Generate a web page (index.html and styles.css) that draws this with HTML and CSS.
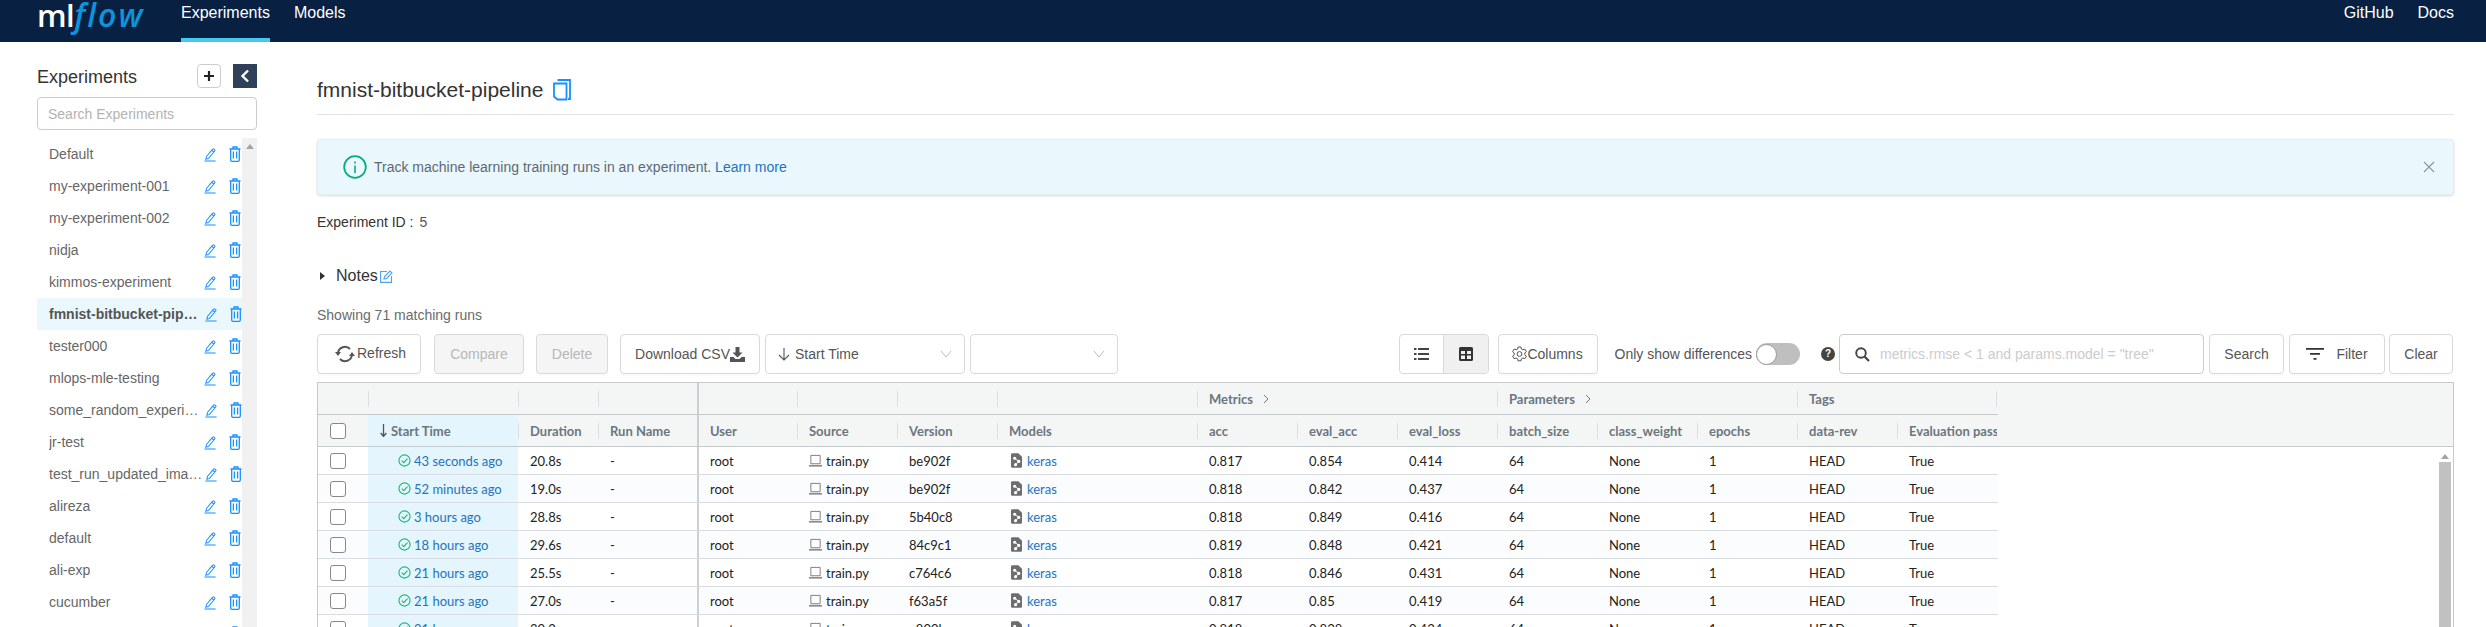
FILE: index.html
```html
<!DOCTYPE html>
<html>
<head>
    <title>MLflow Experiments</title>
    <link rel="stylesheet" href="styles.css">
</head>
<body>
    <svg class="sprites" width="0" height="0">
        <symbol id="i-edit" viewBox="0 0 13 16"><path d="M2.6 10.2 9.3 2.2a1 1 0 0 1 1.4-.1l.8.7a1 1 0 0 1 .1 1.4L4.9 12.2l-2.8.9zM8.4 3.4l2.3 2M.4 15h12.2" fill="none" stroke="currentColor" stroke-width="1.1"/></symbol>
        <symbol id="i-trash" viewBox="0 0 12 16"><path d="M.5 3h11M4 3V1h4v2M1.7 3v11a1.3 1.3 0 0 0 1.3 1.3h6a1.3 1.3 0 0 0 1.3-1.3V3M4.4 5.5v7M7.6 5.5v7" fill="none" stroke="currentColor" stroke-width="1.3"/></symbol>
        <symbol id="i-check" viewBox="0 0 14 14"><circle cx="7" cy="7" r="6" fill="none" stroke="currentColor" stroke-width="1.2"/><path d="M4 7.2l2.2 2.2L10.2 5" fill="none" stroke="currentColor" stroke-width="1.2"/></symbol>
        <symbol id="i-laptop" viewBox="0 0 14 14"><path d="M2 1.5h10v9H2z" fill="none" stroke="#777" stroke-width="1"/><path d="M0 12h14v1.5H0z" fill="#777"/></symbol>
        <symbol id="i-model" viewBox="0 0 12 16"><path d="M1.5 0H8l4 4v10.5a1.5 1.5 0 0 1-1.5 1.5h-9A1.5 1.5 0 0 1 0 14.500V1.500A1.500 1.500 0 0 1 1.500 0z" fill="#6d6d6d"/><circle cx="4" cy="5.500" r="1.700" fill="#fff"/><circle cx="8.500" cy="9" r="1.700" fill="#fff"/><circle cx="5" cy="12.500" r="1.700" fill="#fff"/><path d="M4 5.500l4.500 3.500L5 12.500" fill="none" stroke="#fff"/></symbol>
    </svg>

    <header class="topbar">
        <a class="logo"><span class="logo-ml">ml</span><span class="logo-flow">flow</span></a>
        <a class="tab tab-active">Experiments</a>
        <a class="tab">Models</a>
        <div class="topbar-right">
            <a class="tab">GitHub</a>
            <a class="tab">Docs</a>
        </div>
    </header>

    <div class="layout">
        <aside class="sidebar">
            <div class="sidebar-head">
                <h1>Experiments</h1>
                <button class="add-btn">
                    <svg width="12" height="12" viewBox="0 0 12 12"><path d="M6 1v10M1 6h10" stroke="#222" stroke-width="2.200"/></svg>
                </button>
                <button class="collapse-btn">
                    <svg width="10" height="14" viewBox="0 0 10 14"><path d="M8 1.500 2.500 7 8 12.500" fill="none" stroke="#fff" stroke-width="2.400"/></svg>
                </button>
            </div>
            <input class="exp-search" type="text" placeholder="Search Experiments">
            <div class="exp-wrap">
                <ul class="exp-list">
                    <li class="exp-row"><span class="exp-name">Default</span><svg class="exp-edit"><use href="#i-edit"/></svg><svg class="exp-trash"><use href="#i-trash"/></svg></li>
                    <li class="exp-row"><span class="exp-name">my-experiment-001</span><svg class="exp-edit"><use href="#i-edit"/></svg><svg class="exp-trash"><use href="#i-trash"/></svg></li>
                    <li class="exp-row"><span class="exp-name">my-experiment-002</span><svg class="exp-edit"><use href="#i-edit"/></svg><svg class="exp-trash"><use href="#i-trash"/></svg></li>
                    <li class="exp-row"><span class="exp-name">nidja</span><svg class="exp-edit"><use href="#i-edit"/></svg><svg class="exp-trash"><use href="#i-trash"/></svg></li>
                    <li class="exp-row"><span class="exp-name">kimmos-experiment</span><svg class="exp-edit"><use href="#i-edit"/></svg><svg class="exp-trash"><use href="#i-trash"/></svg></li>
                    <li class="exp-row exp-active exp-long"><span class="exp-name">fmnist-bitbucket-pipeline</span><svg class="exp-edit"><use href="#i-edit"/></svg><svg class="exp-trash"><use href="#i-trash"/></svg></li>
                    <li class="exp-row"><span class="exp-name">tester000</span><svg class="exp-edit"><use href="#i-edit"/></svg><svg class="exp-trash"><use href="#i-trash"/></svg></li>
                    <li class="exp-row"><span class="exp-name">mlops-mle-testing</span><svg class="exp-edit"><use href="#i-edit"/></svg><svg class="exp-trash"><use href="#i-trash"/></svg></li>
                    <li class="exp-row exp-long"><span class="exp-name">some_random_experiment</span><svg class="exp-edit"><use href="#i-edit"/></svg><svg class="exp-trash"><use href="#i-trash"/></svg></li>
                    <li class="exp-row"><span class="exp-name">jr-test</span><svg class="exp-edit"><use href="#i-edit"/></svg><svg class="exp-trash"><use href="#i-trash"/></svg></li>
                    <li class="exp-row exp-long"><span class="exp-name">test_run_updated_image_name</span><svg class="exp-edit"><use href="#i-edit"/></svg><svg class="exp-trash"><use href="#i-trash"/></svg></li>
                    <li class="exp-row"><span class="exp-name">alireza</span><svg class="exp-edit"><use href="#i-edit"/></svg><svg class="exp-trash"><use href="#i-trash"/></svg></li>
                    <li class="exp-row"><span class="exp-name">default</span><svg class="exp-edit"><use href="#i-edit"/></svg><svg class="exp-trash"><use href="#i-trash"/></svg></li>
                    <li class="exp-row"><span class="exp-name">ali-exp</span><svg class="exp-edit"><use href="#i-edit"/></svg><svg class="exp-trash"><use href="#i-trash"/></svg></li>
                    <li class="exp-row"><span class="exp-name">cucumber</span><svg class="exp-edit"><use href="#i-edit"/></svg><svg class="exp-trash"><use href="#i-trash"/></svg></li>
                    <li class="exp-row"><span class="exp-name">test</span><svg class="exp-edit"><use href="#i-edit"/></svg><svg class="exp-trash"><use href="#i-trash"/></svg></li>
                </ul>
                <div class="exp-scroll"><span class="arrow-up"></span></div>
            </div>
        </aside>

        <main class="content">
            <div class="title-row">
                <h2>fmnist-bitbucket-pipeline</h2>
                <svg class="copy-icon" width="18" height="22" viewBox="0 0 18 22"><path d="M4.500 1h12.500v19h-2M1 4.500h12.500V20.500H4.500L1 17.500z" fill="none" stroke="#1890ff" stroke-width="1.800"/></svg>
            </div>

            <div class="notice">
                <svg class="notice-icon" width="24" height="24" viewBox="0 0 24 24"><circle cx="12" cy="12" r="10.800" fill="none" stroke="#0bae78" stroke-width="1.800"/><path d="M12 10.500V18M12 6.500v2" stroke="#0bae78" stroke-width="1.600"/></svg>
                <span>Track machine learning training runs in an experiment. <a class="link">Learn more</a></span>
                <svg class="notice-close" width="12" height="12" viewBox="0 0 12 12"><path d="M1 1l10 10M11 1 1 11" stroke="#8a9499" stroke-width="1.100"/></svg>
            </div>

            <div class="exp-id"><span class="exp-id-label">Experiment ID :</span><span class="exp-id-value">5</span></div>

            <div class="notes">
                <span class="notes-caret"></span>
                <span class="notes-label">Notes</span>
                <svg width="13" height="13" viewBox="0 0 13 13"><path d="M7 1.500H.6v10.900h10.900V6" fill="none" stroke="#4aa3f5" stroke-width="1.100"/><path d="M4.500 6.500 10 1l2 2-5.500 5.500-2.500.5z" fill="none" stroke="#4aa3f5" stroke-width="1.100"/></svg>
            </div>

            <div class="showing">Showing 71 matching runs</div>

            <div class="toolbar">
                <button class="btn btn-refresh">
                    <svg width="20" height="20" viewBox="0 0 20 20"><path d="M3 9a7 7 0 0 1 12-4" fill="none" stroke="#555" stroke-width="2"/><path d="M17 11a7 7 0 0 1-12 4" fill="none" stroke="#555" stroke-width="2"/><path d="M0 8h6l-3 4zM14 12h6l-3-4z" fill="#555"/></svg>
                    <span class="refresh-label">Refresh</span>
                </button>
                <button class="btn btn-off btn-compare">Compare</button>
                <button class="btn btn-off btn-delete">Delete</button>
                <button class="btn btn-csv">Download CSV<svg width="15" height="15" viewBox="0 0 15 15"><path d="M5.500 0h4v5.500h3L7.500 10.500 2.500 5.500h3z" fill="#555"/><path d="M0 10h3.500l2 2h4l2-2H15v5H0z" fill="#555"/></svg></button>
                <div class="select select-sort">
                    <svg width="12" height="14" viewBox="0 0 12 14"><path d="M6 1v12M1 8l5 5 5-5" fill="none" stroke="#555" stroke-width="1.100"/></svg>
                    <span class="select-text">Start Time</span>
                    <svg class="select-chev" width="12" height="8" viewBox="0 0 12 8"><path d="M1 1l5 6 5-6" fill="none" stroke="#bbb" stroke-width="1"/></svg>
                </div>
                <div class="select select-empty">
                    <svg class="select-chev" width="12" height="8" viewBox="0 0 12 8"><path d="M1 1l5 6 5-6" fill="none" stroke="#bbb" stroke-width="1"/></svg>
                </div>

                <div class="toolbar-right">
                    <div class="view-toggle">
                        <span class="view-btn">
                            <svg width="15" height="14" viewBox="0 0 15 14"><path d="M0 1h2.500v2H0zM0 6h2.500v2H0zM0 11h2.500v2H0zM4 1h11v2H4zM4 6h11v2H4zM4 11h11v2H4z" fill="#444"/></svg>
                        </span>
                        <span class="view-btn view-on">
                            <svg width="14" height="14" viewBox="0 0 14 14"><path d="M0 1.500A1.500 1.500 0 0 1 1.500 0h11A1.500 1.500 0 0 1 14 1.500v11a1.500 1.500 0 0 1-1.500 1.500h-11A1.500 1.500 0 0 1 0 12.500zM2 4v3h4V4zm6 0v3h4V4zM2 8.500v3.500h4V8.500zm6 0v3.500h4V8.500z" fill="#333" fill-rule="evenodd"/></svg>
                        </span>
                    </div>
                    <button class="btn btn-columns">
                        <svg width="15" height="16" viewBox="0 0 15 16"><path d="M6 1h3l.4 2 1.500.8 2-.7 1.500 2.600-1.600 1.300v1.800l1.600 1.300-1.500 2.600-2-.7-1.500.8-.4 2H6l-.4-2-1.500-.8-2 .7L.6 10.100l1.600-1.300V7L.6 5.700l1.500-2.600 2 .7 1.500-.8z" fill="none" stroke="#555"/><circle cx="7.500" cy="8" r="2.400" fill="none" stroke="#555"/></svg>Columns
                    </button>
                    <span class="diff-label">Only show differences</span>
                    <span class="switch"><span class="switch-knob"></span></span>
                    <span class="help">?</span>
                    <div class="search-box">
                        <svg width="15" height="15" viewBox="0 0 15 15"><circle cx="6" cy="6" r="4.800" fill="none" stroke="#444" stroke-width="1.900"/><path d="M9.500 9.500 14 14" stroke="#444" stroke-width="2.200"/></svg>
                        <input type="text" placeholder="metrics.rmse &lt; 1 and params.model = &quot;tree&quot;">
                    </div>
                    <button class="btn btn-search">Search</button>
                    <button class="btn btn-filter">
                        <svg width="18" height="14" viewBox="0 0 18 14"><path d="M0 1h18v1.800H0zM4 6h10v1.800H4zM7.500 11h3v1.800h-3z" fill="#333"/></svg>Filter
                    </button>
                    <button class="btn btn-clear">Clear</button>
                </div>
            </div>

            <div class="runs">
                <div class="runs-head">
                    <div class="grid group-row">
                        <div class="hcell"></div>
                        <div class="hcell"><span class="sep"></span></div>
                        <div class="hcell"><span class="sep"></span></div>
                        <div class="hcell"><span class="sep"></span></div>
                        <div class="hcell col-split"></div>
                        <div class="hcell"><span class="sep"></span></div>
                        <div class="hcell"><span class="sep"></span></div>
                        <div class="hcell"><span class="sep"></span></div>
                        <div class="hcell span-3"><span class="sep">Metrics<svg class="group-chev" width="7" height="10" viewBox="0 0 7 10"><path d="M1 1l4 4-4 4" fill="none" stroke="#777"/></svg></span></div>
                        <div class="hcell span-3"><span class="sep">Parameters<svg class="group-chev" width="7" height="10" viewBox="0 0 7 10"><path d="M1 1l4 4-4 4" fill="none" stroke="#777"/></svg></span></div>
                        <div class="hcell span-2 hcell-end"><span class="sep">Tags</span><span class="sep"></span></div>
                    </div>
                    <div class="grid name-row">
                        <div class="hcell check-cell"><span class="box"></span></div>
                        <div class="hcell sorted"><span class="sep sep-off"><svg width="7" height="13" viewBox="0 0 7 13"><path d="M3.500 0v12M.7 9l2.800 3.500L6.300 9" fill="none" stroke="#555" stroke-width="1.300"/></svg> Start Time</span></div>
                        <div class="hcell"><span class="sep">Duration</span></div>
                        <div class="hcell"><span class="sep">Run Name</span></div>
                        <div class="hcell col-split">User</div>
                        <div class="hcell"><span class="sep">Source</span></div>
                        <div class="hcell"><span class="sep">Version</span></div>
                        <div class="hcell"><span class="sep">Models</span></div>
                        <div class="hcell"><span class="sep">acc</span></div>
                        <div class="hcell"><span class="sep">eval_acc</span></div>
                        <div class="hcell"><span class="sep">eval_loss</span></div>
                        <div class="hcell"><span class="sep">batch_size</span></div>
                        <div class="hcell"><span class="sep">class_weight</span></div>
                        <div class="hcell"><span class="sep">epochs</span></div>
                        <div class="hcell"><span class="sep">data-rev</span></div>
                        <div class="hcell"><span class="sep">Evaluation pass</span></div>
                    </div>
                </div>

                <div class="runs-body">
                    <div class="rows">
                        <div class="grid run-row">
                            <div class="cell check-cell"><span class="box"></span></div>
                            <div class="cell sorted time-cell"><svg class="ok"><use href="#i-check"/></svg><a class="link">43 seconds ago</a></div>
                            <div class="cell">20.8s</div><div class="cell">-</div><div class="cell col-split">root</div>
                            <div class="cell"><svg class="src"><use href="#i-laptop"/></svg>train.py</div><div class="cell">be902f</div>
                            <div class="cell cell-model"><svg class="mdl"><use href="#i-model"/></svg><a class="link">keras</a></div>
                            <div class="cell">0.817</div><div class="cell">0.854</div><div class="cell">0.414</div>
                            <div class="cell">64</div><div class="cell">None</div><div class="cell">1</div><div class="cell">HEAD</div><div class="cell">True</div>
                        </div>
                        <div class="grid run-row">
                            <div class="cell check-cell"><span class="box"></span></div>
                            <div class="cell sorted time-cell"><svg class="ok"><use href="#i-check"/></svg><a class="link">52 minutes ago</a></div>
                            <div class="cell">19.0s</div><div class="cell">-</div><div class="cell col-split">root</div>
                            <div class="cell"><svg class="src"><use href="#i-laptop"/></svg>train.py</div><div class="cell">be902f</div>
                            <div class="cell cell-model"><svg class="mdl"><use href="#i-model"/></svg><a class="link">keras</a></div>
                            <div class="cell">0.818</div><div class="cell">0.842</div><div class="cell">0.437</div>
                            <div class="cell">64</div><div class="cell">None</div><div class="cell">1</div><div class="cell">HEAD</div><div class="cell">True</div>
                        </div>
                        <div class="grid run-row">
                            <div class="cell check-cell"><span class="box"></span></div>
                            <div class="cell sorted time-cell"><svg class="ok"><use href="#i-check"/></svg><a class="link">3 hours ago</a></div>
                            <div class="cell">28.8s</div><div class="cell">-</div><div class="cell col-split">root</div>
                            <div class="cell"><svg class="src"><use href="#i-laptop"/></svg>train.py</div><div class="cell">5b40c8</div>
                            <div class="cell cell-model"><svg class="mdl"><use href="#i-model"/></svg><a class="link">keras</a></div>
                            <div class="cell">0.818</div><div class="cell">0.849</div><div class="cell">0.416</div>
                            <div class="cell">64</div><div class="cell">None</div><div class="cell">1</div><div class="cell">HEAD</div><div class="cell">True</div>
                        </div>
                        <div class="grid run-row">
                            <div class="cell check-cell"><span class="box"></span></div>
                            <div class="cell sorted time-cell"><svg class="ok"><use href="#i-check"/></svg><a class="link">18 hours ago</a></div>
                            <div class="cell">29.6s</div><div class="cell">-</div><div class="cell col-split">root</div>
                            <div class="cell"><svg class="src"><use href="#i-laptop"/></svg>train.py</div><div class="cell">84c9c1</div>
                            <div class="cell cell-model"><svg class="mdl"><use href="#i-model"/></svg><a class="link">keras</a></div>
                            <div class="cell">0.819</div><div class="cell">0.848</div><div class="cell">0.421</div>
                            <div class="cell">64</div><div class="cell">None</div><div class="cell">1</div><div class="cell">HEAD</div><div class="cell">True</div>
                        </div>
                        <div class="grid run-row">
                            <div class="cell check-cell"><span class="box"></span></div>
                            <div class="cell sorted time-cell"><svg class="ok"><use href="#i-check"/></svg><a class="link">21 hours ago</a></div>
                            <div class="cell">25.5s</div><div class="cell">-</div><div class="cell col-split">root</div>
                            <div class="cell"><svg class="src"><use href="#i-laptop"/></svg>train.py</div><div class="cell">c764c6</div>
                            <div class="cell cell-model"><svg class="mdl"><use href="#i-model"/></svg><a class="link">keras</a></div>
                            <div class="cell">0.818</div><div class="cell">0.846</div><div class="cell">0.431</div>
                            <div class="cell">64</div><div class="cell">None</div><div class="cell">1</div><div class="cell">HEAD</div><div class="cell">True</div>
                        </div>
                        <div class="grid run-row">
                            <div class="cell check-cell"><span class="box"></span></div>
                            <div class="cell sorted time-cell"><svg class="ok"><use href="#i-check"/></svg><a class="link">21 hours ago</a></div>
                            <div class="cell">27.0s</div><div class="cell">-</div><div class="cell col-split">root</div>
                            <div class="cell"><svg class="src"><use href="#i-laptop"/></svg>train.py</div><div class="cell">f63a5f</div>
                            <div class="cell cell-model"><svg class="mdl"><use href="#i-model"/></svg><a class="link">keras</a></div>
                            <div class="cell">0.817</div><div class="cell">0.85</div><div class="cell">0.419</div>
                            <div class="cell">64</div><div class="cell">None</div><div class="cell">1</div><div class="cell">HEAD</div><div class="cell">True</div>
                        </div>
                        <div class="grid run-row">
                            <div class="cell check-cell"><span class="box"></span></div>
                            <div class="cell sorted time-cell"><svg class="ok"><use href="#i-check"/></svg><a class="link">21 hours ago</a></div>
                            <div class="cell">30.2s</div><div class="cell">-</div><div class="cell col-split">root</div>
                            <div class="cell"><svg class="src"><use href="#i-laptop"/></svg>train.py</div><div class="cell">e800ba</div>
                            <div class="cell cell-model"><svg class="mdl"><use href="#i-model"/></svg><a class="link">keras</a></div>
                            <div class="cell">0.818</div><div class="cell">0.838</div><div class="cell">0.434</div>
                            <div class="cell">64</div><div class="cell">None</div><div class="cell">1</div><div class="cell">HEAD</div><div class="cell">True</div>
                        </div>
                    </div>
                    <div class="runs-scroll">
                        <span class="arrow-up"></span>
                        <span class="runs-thumb"></span>
                    </div>
                </div>
            </div>
        </main>
    </div>
</body>
</html>
```

FILE: styles.css
```css
* {
    box-sizing: border-box;
}
html, body {
    height: 100%;
}
body {
    margin: 0;
    font-family: "Liberation Sans", Arial, sans-serif;
    font-size: 14px;
    color: #333;
    background: #fff;
    display: flex;
    flex-direction: column;
    overflow: hidden;
}
.sprites {
    position: absolute;
}
h1, h2, ul {
    margin: 0;
    padding: 0;
    font-weight: normal;
}
button {
    font-family: inherit;
}
.link {
    color: #2374bb;
}

/* top bar */
.topbar {
    flex: none;
    height: 42px;
    padding: 0 32px 0 37px;
    background: #082142;
    display: flex;
}
.logo {
    width: 144px;
    height: 42px;
    line-height: 30px;
    white-space: nowrap;
}
.logo-ml {
    font-family: "Open Sans", sans-serif;
    font-size: 31px;
    font-weight: 600;
    letter-spacing: -0.5px;
    color: #fff;
}
.logo-flow {
    font-family: "Open Sans", sans-serif;
    font-size: 32px;
    font-style: italic;
    font-weight: 600;
    letter-spacing: 2px;
    color: #0c95dc;
}
.tab {
    height: 42px;
    margin-right: 24px;
    line-height: 26px;
    font-size: 16px;
    color: #fff;
}
.tab-active {
    border-bottom: 4px solid #43c9ed;
}
.topbar-right {
    margin-left: auto;
    display: flex;
}
.topbar-right .tab:last-child {
    margin-right: 0;
}

.layout {
    flex: 1;
    min-height: 0;
    display: flex;
}

/* experiments sidebar */
.sidebar {
    flex: none;
    width: 317px;
    padding: 22px 60px 0 37px;
}
.sidebar-head {
    height: 24px;
    display: flex;
    align-items: center;
}
.sidebar-head h1 {
    font-size: 18px;
    line-height: 24px;
    padding-top: 2px;
    margin-right: auto;
}
.add-btn {
    width: 24px;
    height: 24px;
    margin-right: 12px;
    padding: 0;
    border: 1px solid #ccc;
    border-radius: 4px;
    background: #fff;
    display: flex;
    align-items: center;
    justify-content: center;
}
.collapse-btn {
    width: 24px;
    height: 24px;
    padding: 0;
    border: 0;
    background: #2e4159;
    display: flex;
    align-items: center;
    justify-content: center;
}
.exp-search {
    display: block;
    width: 220px;
    height: 33px;
    margin-top: 9px;
    padding: 0 10px;
    border: 1px solid #ccc;
    border-radius: 4px;
    font-family: inherit;
    font-size: 14px;
}
.exp-search::placeholder {
    color: #b3b3b3;
}
.exp-wrap {
    margin-top: 8px;
    display: flex;
}
.exp-list {
    width: 205px;
    list-style: none;
}
.exp-row {
    height: 32px;
    padding-left: 12px;
    display: flex;
    align-items: center;
    color: #666;
}
.exp-name {
    width: 154px;
    white-space: nowrap;
    overflow: hidden;
    text-overflow: ellipsis;
}
.exp-active {
    background: #eaf8fe;
    font-weight: bold;
    color: #555;
}
.exp-edit {
    width: 12px;
    height: 15px;
    margin-left: 1px;
    color: #1890ff;
}
.exp-long .exp-edit {
    margin-left: 2px;
}
.exp-trash {
    width: 12px;
    height: 16px;
    margin-left: 13px;
    color: #1890ff;
}
.exp-scroll {
    width: 15px;
    height: 520px;
    padding-top: 6px;
    background: #f1f1f1;
    display: flex;
    justify-content: center;
}
.arrow-up {
    width: 0;
    height: 0;
    border-left: 4px solid transparent;
    border-right: 4px solid transparent;
    border-bottom: 5px solid #a3a3a3;
}

/* main column */
.content {
    flex: 1;
    min-width: 0;
    padding-right: 32px;
}
.title-row {
    height: 73px;
    padding-top: 34px;
    border-bottom: 1px solid #e4e4e4;
    display: flex;
    align-items: flex-start;
}
.title-row h2 {
    font-size: 21px;
    line-height: 28px;
}
.copy-icon {
    margin: 3px 0 0 10px;
}
.notice {
    height: 56px;
    margin-top: 24px;
    padding: 0 18px 0 25px;
    background: #eaf8fe;
    border: 1px solid #e8eef0;
    border-radius: 4px;
    box-shadow: 0 1px 3px rgba(0, 0, 0, 0.15);
    display: flex;
    align-items: center;
    color: #5f6871;
}
.notice-icon {
    margin-right: 7px;
}
.notice-close {
    margin-left: auto;
}
.exp-id {
    margin-top: 17px;
    line-height: 20px;
}
.exp-id-value {
    margin-left: 6px;
    color: #555;
}
.notes {
    height: 24px;
    margin-top: 32px;
    display: flex;
    align-items: center;
}
.notes-caret {
    width: 0;
    height: 0;
    margin: 0 11px 0 3px;
    border-top: 4px solid transparent;
    border-bottom: 4px solid transparent;
    border-left: 5px solid #333;
}
.notes-label {
    font-size: 16px;
    margin-right: 2px;
}
.showing {
    margin-top: 17px;
    line-height: 20px;
    color: #6b6b6b;
}

/* toolbar */
.toolbar {
    height: 40px;
    margin-top: 9px;
    display: flex;
}
.btn {
    height: 40px;
    padding: 0;
    border: 1px solid #d9d9d9;
    border-radius: 4px;
    background: #fff;
    box-shadow: 0 2px 0 rgba(0, 0, 0, 0.015);
    font-size: 14px;
    color: #555;
    display: flex;
    align-items: center;
    justify-content: center;
}
.btn-refresh {
    width: 104px;
    padding-left: 17px;
    justify-content: flex-start;
}
.refresh-label {
    margin: 0 0 2px 2px;
}
.btn-off {
    background: #f5f5f5;
    color: #b8b8b8;
}
.btn-compare {
    width: 90px;
    margin-left: 13px;
}
.btn-delete {
    width: 72px;
    margin-left: 12px;
}
.btn-csv {
    width: 140px;
    margin-left: 12px;
}
.select {
    height: 40px;
    padding: 0 12px;
    border: 1px solid #d9d9d9;
    border-radius: 4px;
    display: flex;
    align-items: center;
    color: #555;
}
.select-sort {
    width: 200px;
    margin-left: 5px;
}
.select-empty {
    width: 148px;
    margin-left: 5px;
}
.select-text {
    margin-left: 5px;
}
.select-chev {
    margin-left: auto;
}
.toolbar-right {
    margin-left: auto;
    display: flex;
    align-items: center;
}
.view-toggle {
    width: 90px;
    height: 40px;
    border: 1px solid #d9d9d9;
    border-radius: 4px;
    display: flex;
    overflow: hidden;
}
.view-btn {
    flex: 1;
    display: flex;
    align-items: center;
    justify-content: center;
}
.view-on {
    background: #f0f0f0;
    border-left: 1px solid #d9d9d9;
}
.btn-columns {
    width: 100px;
    margin-left: 9px;
}
.diff-label {
    margin-left: 17px;
    color: #555;
}
.switch {
    width: 44px;
    height: 22px;
    margin-left: 4px;
    border-radius: 11px;
    background: #bfbfbf;
    display: flex;
    align-items: center;
}
.switch-knob {
    width: 21px;
    height: 21px;
    border-radius: 50%;
    background: #fff;
    border: 1px solid #999;
}
.help {
    width: 14px;
    height: 14px;
    margin-left: 21px;
    border-radius: 50%;
    background: #444;
    color: #fff;
    font-size: 10px;
    font-weight: bold;
    line-height: 14px;
    text-align: center;
}
.search-box {
    width: 365px;
    height: 40px;
    margin-left: 4px;
    padding-left: 15px;
    border: 1px solid #ccc;
    border-radius: 4px;
    display: flex;
    align-items: center;
}
.search-box input {
    flex: 1;
    min-width: 0;
    margin-left: 10px;
    padding: 0;
    border: 0;
    outline: 0;
    font-family: inherit;
    font-size: 14px;
}
.search-box input::placeholder {
    color: #ccc;
}
.btn-search {
    width: 75px;
    margin-left: 5px;
}
.btn-filter {
    width: 96px;
    margin-left: 5px;
    gap: 12px;
}
.btn-clear {
    width: 64px;
    margin: 0 1px 0 4px;
}

/* runs table */
.runs {
    margin-top: 8px;
    border: 1px solid #c4c9cc;
    border-bottom: 0;
    font-family: Lato, "Open Sans", sans-serif;
    font-size: 13px;
}
.runs-head {
    background: #f4f6f6;
    border-bottom: 1px solid #c4c9cc;
}
.grid {
    width: 1680px;
    display: grid;
    grid-template-columns: 50px 150px 80px 99px repeat(3, 100px) 200px repeat(8, 100px);
}
.group-row {
    height: 32px;
    border-bottom: 1px solid #c4c9cc;
}
.name-row {
    height: 31px;
}
.hcell {
    min-width: 0;
    display: flex;
    align-items: center;
    font-weight: bold;
    color: #6b7680;
    white-space: nowrap;
    overflow: hidden;
}
.span-3 {
    grid-column: span 3;
}
.span-2 {
    grid-column: span 2;
}
.hcell-end {
    justify-content: space-between;
}
.hcell-end .sep:last-child {
    padding-left: 0;
}
.sep {
    height: 16px;
    padding-left: 11px;
    border-left: 1px solid #dcdfe1;
    line-height: 16px;
    display: flex;
    align-items: center;
    gap: 4px;
}
.sep-off {
    border-left-color: transparent;
}
.group-chev {
    margin-left: 6px;
}
.col-split {
    border-left: 2px solid #ccd0d3;
    padding-left: 11px;
}
.sorted {
    background: #e4f5fd;
}
.check-cell {
    padding-left: 12px;
}
.box {
    width: 16px;
    height: 16px;
    border: 1px solid #888;
    border-radius: 3px;
    background: #fff;
}
.runs-body {
    height: 200px;
    display: flex;
    justify-content: space-between;
}
.run-row {
    height: 28px;
    border-bottom: 1px solid #d8dce0;
}
.run-row:nth-child(even) {
    background: #fbfcfd;
}
.cell {
    min-width: 0;
    padding-left: 12px;
    display: flex;
    align-items: center;
    color: #222;
    white-space: nowrap;
}
.cell.col-split {
    padding-left: 11px;
}
.time-cell {
    padding-left: 30px;
}
.cell-model {
    padding-left: 14px;
}
.ok {
    width: 13px;
    height: 13px;
    margin-right: 3px;
    color: #22b573;
}
.src {
    width: 13px;
    height: 13px;
    margin-right: 4px;
}
.mdl {
    width: 11px;
    height: 15px;
    margin-right: 5px;
}
.runs-scroll {
    width: 12px;
    margin-right: 2px;
    padding-top: 7px;
    display: flex;
    flex-direction: column;
    align-items: center;
}
.runs-thumb {
    width: 12px;
    flex: 1;
    margin-top: 3px;
    background: #c1c1c1;
}
```
